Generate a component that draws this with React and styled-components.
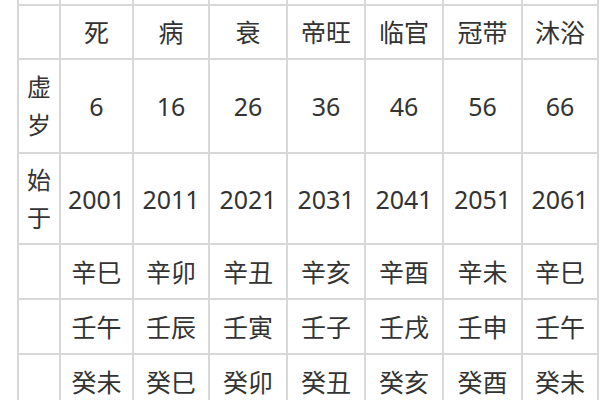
import React from "react";
import styled, { createGlobalStyle } from "styled-components";

const GlobalStyle = createGlobalStyle`
  html, body {
    margin: 0;
    padding: 0;
    background: #ffffff;
  }
  body {
    font-family: "Noto Sans", "Noto Sans CJK SC", sans-serif;
    color: #333333;
  }
`;

const Page = styled.div`
  width: 600px;
  height: 400px;
  overflow: hidden;
  padding-left: 17px;
  box-sizing: border-box;
  background: #ffffff;
`;

const Table = styled.div`
  display: grid;
  grid-template-columns: 40px 71px 74px 76px 76px 76px 77px 74px;
  grid-template-rows: 4px 52px 92px 89px 53px 53px 53px;
  gap: 2px;
  padding: 0 2px 2px 2px;
  width: max-content;
  background: #d8d8d8;
`;

const Cell = styled.div`
  background: #ffffff;
  display: flex;
  align-items: center;
  justify-content: center;
  text-align: center;
  font-size: 25px;
  line-height: 1.2;
  color: #333333;
  white-space: nowrap;
  overflow: hidden;
`;

const Label = styled(Cell)`
  white-space: normal;
  font-size: 24px;
  line-height: 38px;
  word-break: break-all;
  padding: 0 7px;
`;

const stages = ["死", "病", "衰", "帝旺", "临官", "冠带", "沐浴"];
const ages = [6, 16, 26, 36, 46, 56, 66];
const years = [2001, 2011, 2021, 2031, 2041, 2051, 2061];
const ganzhi = [
  ["辛巳", "辛卯", "辛丑", "辛亥", "辛酉", "辛未", "辛巳"],
  ["壬午", "壬辰", "壬寅", "壬子", "壬戌", "壬申", "壬午"],
  ["癸未", "癸巳", "癸卯", "癸丑", "癸亥", "癸酉", "癸未"]
];

const rows = [
  { label: "", cells: Array(7).fill("") },
  { label: "", cells: stages },
  { label: "虚岁", cells: ages },
  { label: "始于", cells: years },
  ...ganzhi.map(r => ({ label: "", cells: r }))
];

export default function App() {
  return (
    <>
      <GlobalStyle />
      <Page>
        <Table>
          {rows.map((row, i) => (
            <React.Fragment key={i}>
              <Label>{row.label}</Label>
              {row.cells.map((c, j) => (
                <Cell key={j}>{c}</Cell>
              ))}
            </React.Fragment>
          ))}
        </Table>
      </Page>
    </>
  );
}
